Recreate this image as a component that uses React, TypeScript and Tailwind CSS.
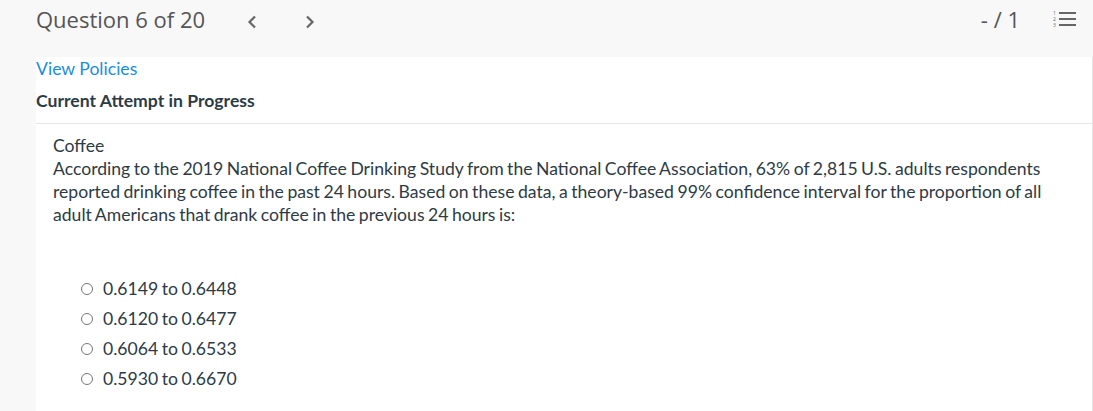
const options = [
  "0.6149 to 0.6448",
  "0.6120 to 0.6477",
  "0.6064 to 0.6533",
  "0.5930 to 0.6670",
];

function ListIcon() {
  return (
    <svg width="24" height="18" viewBox="0 0 24 18" className="text-[#666]">
      <text x="0" y="5" fontSize="5" fill="currentColor" fontFamily="Open Sans, sans-serif">1</text>
      <text x="0" y="11" fontSize="5" fill="currentColor" fontFamily="Open Sans, sans-serif">2</text>
      <text x="0" y="17" fontSize="5" fill="currentColor" fontFamily="Open Sans, sans-serif">3</text>
      <rect x="6" y="2" width="17" height="2" fill="currentColor" />
      <rect x="6" y="8" width="17" height="2" fill="currentColor" />
      <rect x="6" y="14" width="17" height="2" fill="currentColor" />
    </svg>
  );
}

function Chevron({ dir }: { dir: "left" | "right" }) {
  return (
    <svg width="10" height="14" viewBox="0 0 10 14" fill="none" stroke="currentColor" strokeWidth="2.2">
      <polyline points={dir === "left" ? "8,1.5 2.5,7 8,12.5" : "2,1.5 7.5,7 2,12.5"} />
    </svg>
  );
}

export default function App() {
  return (
    <div className="h-[411px] w-[1093px] overflow-hidden bg-[#f8f8f8] font-['Lato',sans-serif]">
      {/* header */}
      <div className="flex h-[57px] items-start pl-[36px] pr-[16px] pt-[4px] font-['Open_Sans',sans-serif] text-[#555]">
        <span className="text-[22px] leading-[30px]">Question 6 of 20</span>
        <span className="ml-[42px] mt-[11px] text-[#666]">
          <Chevron dir="left" />
        </span>
        <span className="ml-[48px] mt-[11px] text-[#666]">
          <Chevron dir="right" />
        </span>
        <span className="ml-auto text-[22px] leading-[30px]">- / 1</span>
        <span className="ml-[33px] mt-[6px]">
          <ListIcon />
        </span>
      </div>

      {/* body */}
      <div className="ml-[36px] h-full border-r border-[#e6e6e6] bg-white">
        <div className="pt-[1px] text-[17.6px] leading-[22px] text-[#1a8fd8]">View Policies</div>
        <div className="pt-[10px] pb-[11px] text-[17.6px] font-bold leading-[22px] text-[#2d3b45]">
          Current Attempt in Progress
        </div>
        <div className="border-t border-[#e6e6e6]" />
        <div className="pl-[17px] pr-[36px] pt-[10px] text-[17.6px] leading-[23px] text-[#2d3b45] [word-spacing:-1px]">
          <div>Coffee</div>
          <p>
            According to the 2019 National Coffee Drinking Study from the National Coffee Association, 63% of 2,815 U.S. adults respondents reported drinking coffee in the past 24 hours. Based on these data, a theory-based 99% confidence interval for the proportion of all adult Americans that drank coffee in the previous 24 hours is:
          </p>
          <div className="mt-[51px] flex flex-col gap-[7px] pl-[28px]">
            {options.map((o) => (
              <label key={o} className="flex items-center gap-[10px] leading-[23px]">
                <span className="h-[12px] w-[12px] rounded-full border border-[#777]" />
                <span>{o}</span>
              </label>
            ))}
          </div>
        </div>
      </div>
    </div>
  );
}
